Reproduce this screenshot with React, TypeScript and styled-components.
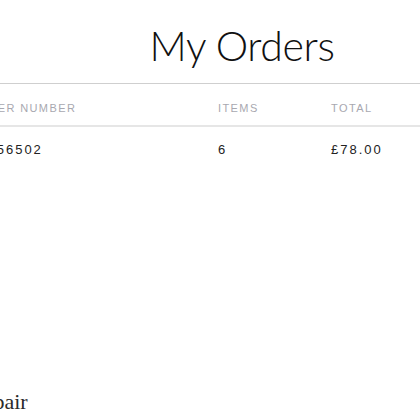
import React from 'react'
import styled, { createGlobalStyle } from 'styled-components'

const Global = createGlobalStyle`
    html, body {
        margin: 0;
        padding: 0;
        background: #fff;
        overflow: hidden;
    }
`

const Page = styled.div`
    width: 564px;
    margin-left: -40px;
    box-sizing: border-box;
`
const Title = styled.h1`
    margin: 0;
    padding: 24px 0 15px;
    font-family: Lato, "Open Sans", sans-serif;
    font-weight: 300;
    font-size: 41px;
    line-height: 44px;
    letter-spacing: -0.4px;
    color: #111;
    text-align: center;
    border-bottom: 1px solid #cfcfcf;
`
const Table = styled.div`
    display: grid;
    grid-template-columns: 258px 113px 1fr;
`
const HeadCell = styled.div<{ first?: boolean }>`
    padding: 18px 0 10px ${({ first }) => first ? '9px' : '0'};
    font-family: "Liberation Sans", Arial, sans-serif;
    font-size: 11px;
    line-height: 13px;
    letter-spacing: 1.4px;
    text-transform: uppercase;
    color: #a8a8b0;
    border-bottom: 2px solid #e6e6e6;
`
const Cell = styled.div<{ first?: boolean }>`
    padding: 15px 0 15px ${({ first }) => first ? '9px' : '0'};
    font-family: "Liberation Sans", Arial, sans-serif;
    font-size: 13px;
    line-height: 15px;
    letter-spacing: 2px;
    color: #222;
`
const Footer = styled.div`
    margin-top: 217px;
    padding-left: 9px;
    font-family: "Liberation Serif", "Times New Roman", serif;
    font-size: 22px;
    line-height: 26px;
    color: #2a2a2a;
`

const orders = [
    { number: '40156502', items: 6, total: '£78.00' },
]

export default function App() {
    return <Page>
        <Global />
        <Title>My Orders</Title>
        <Table>
            <HeadCell first>Order number</HeadCell>
            <HeadCell>Items</HeadCell>
            <HeadCell>Total</HeadCell>
            {orders.map((order) => <React.Fragment key={order.number}>
                <Cell first>{order.number}</Cell>
                <Cell>{order.items}</Cell>
                <Cell>{order.total}</Cell>
            </React.Fragment>)}
        </Table>
        <Footer>Repair</Footer>
    </Page>
}
